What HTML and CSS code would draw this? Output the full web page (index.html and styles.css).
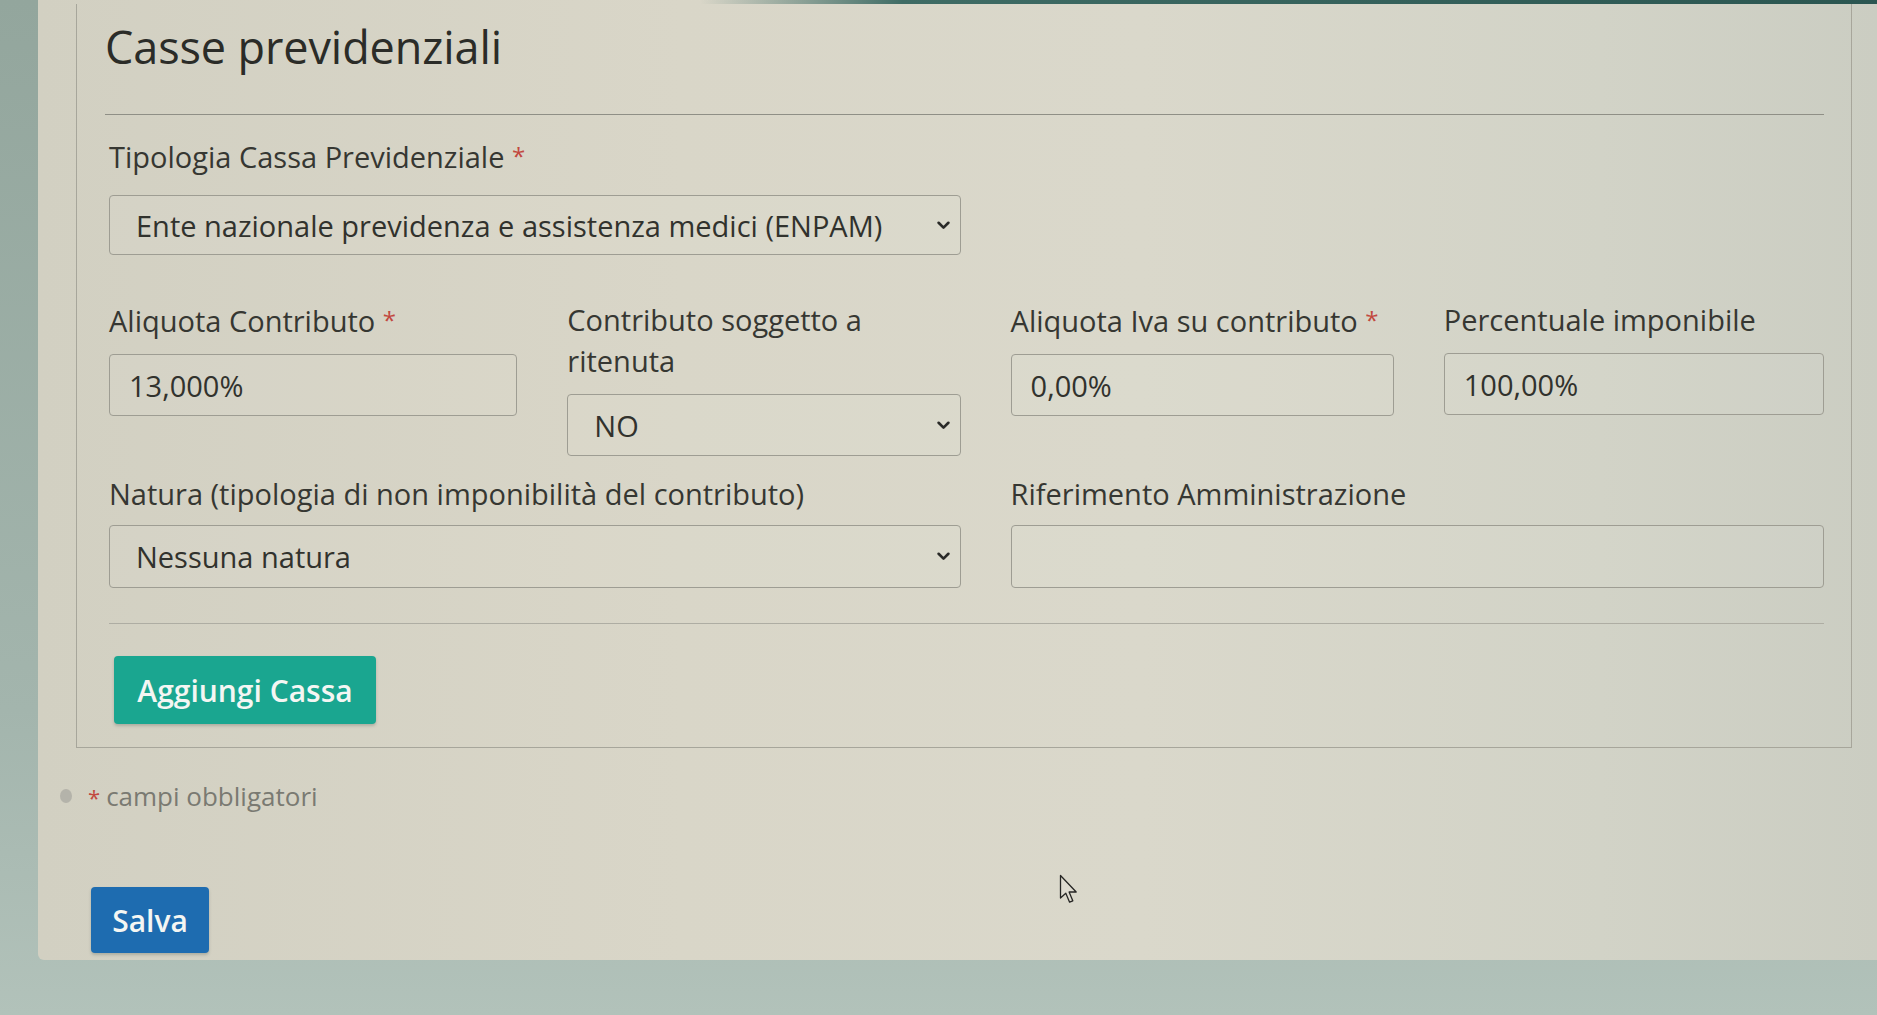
FILE: index.html
```html
<!DOCTYPE html>
<html lang="it">
<head>
<meta charset="utf-8">
<title>Casse previdenziali</title>
<link rel="stylesheet" href="styles.css">
</head>
<body>
<div class="panel">
  <div class="navedge"></div>
  <section class="card">
    <h2 class="title">Casse previdenziali</h2>
    <hr class="rule rule-top">

    <div class="grid row1">
      <div class="field span2">
        <label class="lbl">Tipologia Cassa Previdenziale <span class="req">*</span></label>
        <div class="select">
          <span>Ente nazionale previdenza e assistenza medici (ENPAM)</span>
          <svg class="chev" viewBox="0 0 12 8" width="13" height="9"><path d="M1.5 1.5 L6 6 L10.5 1.5" fill="none" stroke="#2a2a28" stroke-width="2.4" stroke-linecap="round" stroke-linejoin="round"/></svg>
        </div>
      </div>
    </div>

    <div class="grid row2">
      <div class="field">
        <label class="lbl">Aliquota Contributo <span class="req">*</span></label>
        <div class="input">13,000%</div>
      </div>
      <div class="field">
        <label class="lbl">Contributo soggetto a ritenuta</label>
        <div class="select">
          <span>NO</span>
          <svg class="chev" viewBox="0 0 12 8" width="13" height="9"><path d="M1.5 1.5 L6 6 L10.5 1.5" fill="none" stroke="#2a2a28" stroke-width="2.4" stroke-linecap="round" stroke-linejoin="round"/></svg>
        </div>
      </div>
      <div class="field">
        <label class="lbl">Aliquota Iva su contributo <span class="req">*</span></label>
        <div class="input">0,00%</div>
      </div>
      <div class="field">
        <label class="lbl">Percentuale imponibile</label>
        <div class="input">100,00%</div>
      </div>
    </div>

    <div class="grid row3">
      <div class="field span2">
        <label class="lbl">Natura (tipologia di non imponibilità del contributo)</label>
        <div class="select">
          <span>Nessuna natura</span>
          <svg class="chev" viewBox="0 0 12 8" width="13" height="9"><path d="M1.5 1.5 L6 6 L10.5 1.5" fill="none" stroke="#2a2a28" stroke-width="2.4" stroke-linecap="round" stroke-linejoin="round"/></svg>
        </div>
      </div>
      <div class="field span2">
        <label class="lbl">Riferimento Amministrazione</label>
        <div class="input"></div>
      </div>
    </div>

    <hr class="rule rule-bottom">
    <button class="btn btn-teal" type="button">Aggiungi Cassa</button>
  </section>

  <p class="note"><span class="dot"></span><span class="req">*</span> campi obbligatori</p>
  <button class="btn btn-blue" type="button">Salva</button>
</div>

<svg class="cursor" viewBox="0 0 21 30" width="21" height="30"><path d="M1.5 1.5 L1.5 24 L6.8 19.2 L10.6 28.2 L13.8 26.8 L10.1 18 L17.2 18 Z" fill="#dedbd0" stroke="#262624" stroke-width="1.3" stroke-linejoin="round"/></svg>
</body>
</html>
```

FILE: styles.css
```css
html, body {
  margin: 0;
  height: 1015px;
  overflow: hidden;
}

body {
  background: linear-gradient(to bottom, #93a69d 0%, #a3b5ad 70%, #b2c2ba 100%);
  font-family: "Open Sans", "DejaVu Sans", sans-serif;
  color: #34352f;
  position: relative;
}

.panel {
  margin-left: 38px;
  padding: 0 25px 7px 38px;
  background: linear-gradient(to right, #d2d0c2 0%, #d9d6c8 35%, #dad8cb 60%, #d2d3c7 85%, #cbcdc2 100%);
  border-bottom-left-radius: 6px;
}

.navedge {
  height: 4px;
  margin: 0 -25px 0 -38px;
  background: linear-gradient(to right, rgba(47, 92, 86, 0) 0%, rgba(47, 92, 86, 0) 36%, #3f6c65 47%, #2b5651 100%);
}

.card {
  border: 1px solid #a7a69b;
  border-top: none;
  padding: 16px 27px 23px 32px;
}

.title {
  margin: 0 0 0 -4px;
  font-size: 45px;
  line-height: 54px;
  font-weight: 400;
  color: #2b2c28;
  letter-spacing: -0.1px;
}

.rule {
  border: 0;
  border-top: 1px solid #8f8f86;
  height: 0;
}

.rule-top {
  margin: 40px 0 20px -4px;
}

.rule-bottom {
  margin: 35px 0 32px;
  border-top-color: #aeada3;
}

.grid {
  display: grid;
  grid-template-columns: 407fr 392fr 382fr 379fr;
  column-gap: 50px;
  align-items: start;
}

.row1 {
  margin-bottom: 44px;
}

.row2 {
  margin-bottom: 17px;
}

.span2 {
  grid-column: span 2;
}

.field {
  display: flex;
  flex-direction: column;
}

.lbl {
  font-size: 29px;
  line-height: 41px;
  color: #363732;
  margin-bottom: 14px;
}

.row1 .lbl {
  margin-bottom: 18px;
}

.row2 .lbl {
  margin-bottom: 13px;
}

.row3 .lbl {
  margin-bottom: 11px;
}

.req {
  color: #c2483f;
  font-size: 24px;
  vertical-align: 3px;
}

.input,
.select {
  box-sizing: border-box;
  height: 62px;
  border: 1.5px solid #9e9d93;
  border-radius: 4px;
  background: rgba(255, 255, 255, 0.05);
  font-size: 29px;
  color: #31322d;
  display: flex;
  align-items: center;
}

.input {
  padding: 0 19px;
}

.select {
  padding: 0 10px 0 26px;
  justify-content: space-between;
}

.row1 .select {
  height: 60px;
}

.row3 .field .select,
.row3 .field .input {
  height: 63px;
}

.chev {
  flex: none;
}

.btn {
  font-family: "Open Sans", "DejaVu Sans", sans-serif;
  font-size: 30px;
  font-weight: 600;
  color: #f4f6f3;
  border: 0;
  border-radius: 4px;
  display: block;
  box-shadow: 0 2px 3px rgba(60, 70, 65, 0.25);
}

.btn-teal {
  background: #1aa690;
  height: 68px;
  width: 262px;
  margin-left: 5px;
}

.btn-blue {
  background: #1e6cb0;
  height: 66px;
  width: 118px;
  margin: 72px 0 0 15px;
}

.note {
  margin: 29px 0 0 14px;
  font-size: 26px;
  line-height: 36px;
  color: #7a7a72;
  display: flex;
  align-items: center;
}

.note .req {
  font-size: 22px;
  vertical-align: 0;
  margin-right: 6px;
  align-self: flex-start;
  margin-top: 2px;
}

.dot {
  width: 12px;
  height: 14px;
  border-radius: 50%;
  background: #b4b3aa;
  margin: 0 16px 0 -30px;
}

.cursor {
  position: absolute;
  left: 1059px;
  top: 874px;
}
```
